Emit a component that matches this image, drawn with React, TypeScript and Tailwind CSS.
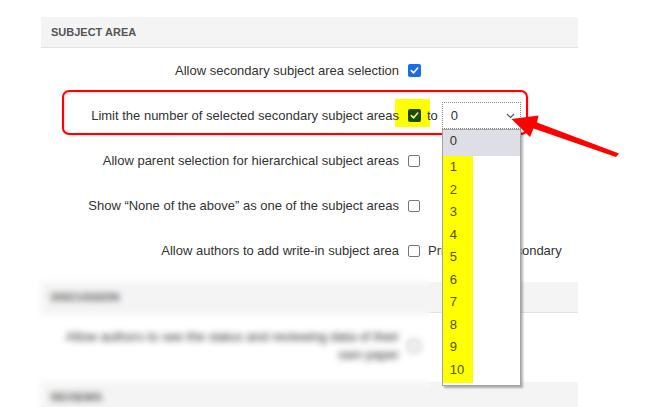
import React from "react";

const font = { fontFamily: '"Liberation Sans", Arial, sans-serif' };

function Check({ tone }: { tone: "on" | "off" | "marked" }) {
  if (tone === "off") {
    return <span className="block h-[12px] w-[12px] rounded-[2px] border border-[#767676] bg-white" />;
  }
  const bg = tone === "on" ? "bg-[#1a6fe0]" : "bg-[#1c4a08]";
  const stroke = tone === "on" ? "#ffffff" : "#f4ff6a";
  return (
    <span className={`flex h-[13px] w-[13px] items-center justify-center rounded-[2px] ${bg}`}>
      <svg width="9" height="9" viewBox="0 0 10 10" fill="none">
        <path d="M1.5 5.2 L4 7.6 L8.6 2.3" stroke={stroke} strokeWidth="1.8" strokeLinecap="round" strokeLinejoin="round" />
      </svg>
    </span>
  );
}

function Row({ label, children }: { label: React.ReactNode; children: React.ReactNode }) {
  return (
    <div className="flex h-[45px] items-center">
      <div className="w-[358px] text-right text-[13px] leading-[17px] text-[#333]">{label}</div>
      <div className="ml-[9px] flex items-center text-[13px] text-[#333]">{children}</div>
    </div>
  );
}

function SectionHead({ title }: { title: string }) {
  return (
    <div className="flex h-[31px] items-center border-b border-[#e2e2e2] bg-[#f4f4f4] pl-[10px] text-[11px] font-bold text-[#555]">
      {title}
    </div>
  );
}

const options = ["0", "1", "2", "3", "4", "5", "6", "7", "8", "9", "10"];

function LimitSelect() {
  return (
    <div className="relative ml-[4px]">
      <div className="flex h-[27px] w-[79px] items-center justify-between border border-dotted border-[#8a8a8a] pl-[8px] pr-[5px] text-[13px] text-[#333]">
        <span>0</span>
        <svg width="9" height="6" viewBox="0 0 9 6" fill="none">
          <path d="M1 1 L4.5 4.5 L8 1" stroke="#555" strokeWidth="1.2" />
        </svg>
      </div>
      <div className="absolute left-0 top-[27px] w-[79px] border border-[#a3a3a3] bg-white pb-[4px] shadow-[2px_2px_2px_rgba(0,0,0,0.3)]">
        <div className="absolute bottom-[2px] left-0 top-[26px] w-[30px] bg-[#ffff00]" />
        {options.map((o, i) => (
          <div
            key={o}
            className={
              i === 0
                ? "relative flex h-[25.5px] items-end bg-[#dedee6] pb-[5px] pl-[7px] text-[13px] text-[#333]"
                : "relative flex h-[22.5px] items-center pl-[7px] text-[13px] text-[#4f4f00]"
            }
          >
            {o}
          </div>
        ))}
      </div>
    </div>
  );
}

export default function App() {
  return (
    <div className="relative h-[407px] w-[670px] overflow-hidden bg-white" style={font}>
      {/* markup drawn under the form */}
      <div className="absolute left-[62px] top-[90px] h-[45px] w-[466px] rounded-[7px] border-2 border-[#ff0000] shadow-[inset_1px_1px_3px_rgba(0,0,0,0.15),1px_1px_2px_rgba(0,0,0,0.15)]" />
      <div className="absolute left-[395px] top-[99px] h-[28px] w-[35px] bg-[#ffff00]" />

      <div className="relative z-10 ml-[41px] w-[537px] pt-[17px]">
        <SectionHead title="SUBJECT AREA" />
        <Row label="Allow secondary subject area selection">
          <Check tone="on" />
        </Row>
        <Row label="Limit the number of selected secondary subject areas">
          <Check tone="marked" />
          <span className="ml-[6px]">to</span>
          <LimitSelect />
        </Row>
        <Row label="Allow parent selection for hierarchical subject areas">
          <Check tone="off" />
        </Row>
        <Row label="Show “None of the above” as one of the subject areas">
          <Check tone="off" />
        </Row>
        <Row label="Allow authors to add write-in subject area">
          <Check tone="off" />
          <span className="ml-[8px]">Primary and secondary</span>
        </Row>

        <div className="mt-[9px]">
          <SectionHead title="DISCUSSION" />
          <div className="flex items-center pb-[18px] pt-[15px]">
            <div className="w-[358px] pl-[4px] text-right text-[13px] leading-[18px] text-[#333]">
              Allow authors to see the status and reviewing data of their own paper
            </div>
            <div className="ml-[9px]">
              <Check tone="off" />
            </div>
          </div>
          <SectionHead title="REVIEWS" />
        </div>
      </div>

      <div className="absolute left-[28px] top-[270px] z-20 h-[137px] w-[402px] backdrop-blur-[3px]" />

      <svg className="pointer-events-none absolute inset-0 z-30" width="670" height="407" viewBox="0 0 670 407">
        <polygon
          points="511.5,119 538.5,115.5 537,122.5 619,153.5 616,157 533.5,128.5 530,137"
          fill="#ff0000"
        />
      </svg>
    </div>
  );
}
